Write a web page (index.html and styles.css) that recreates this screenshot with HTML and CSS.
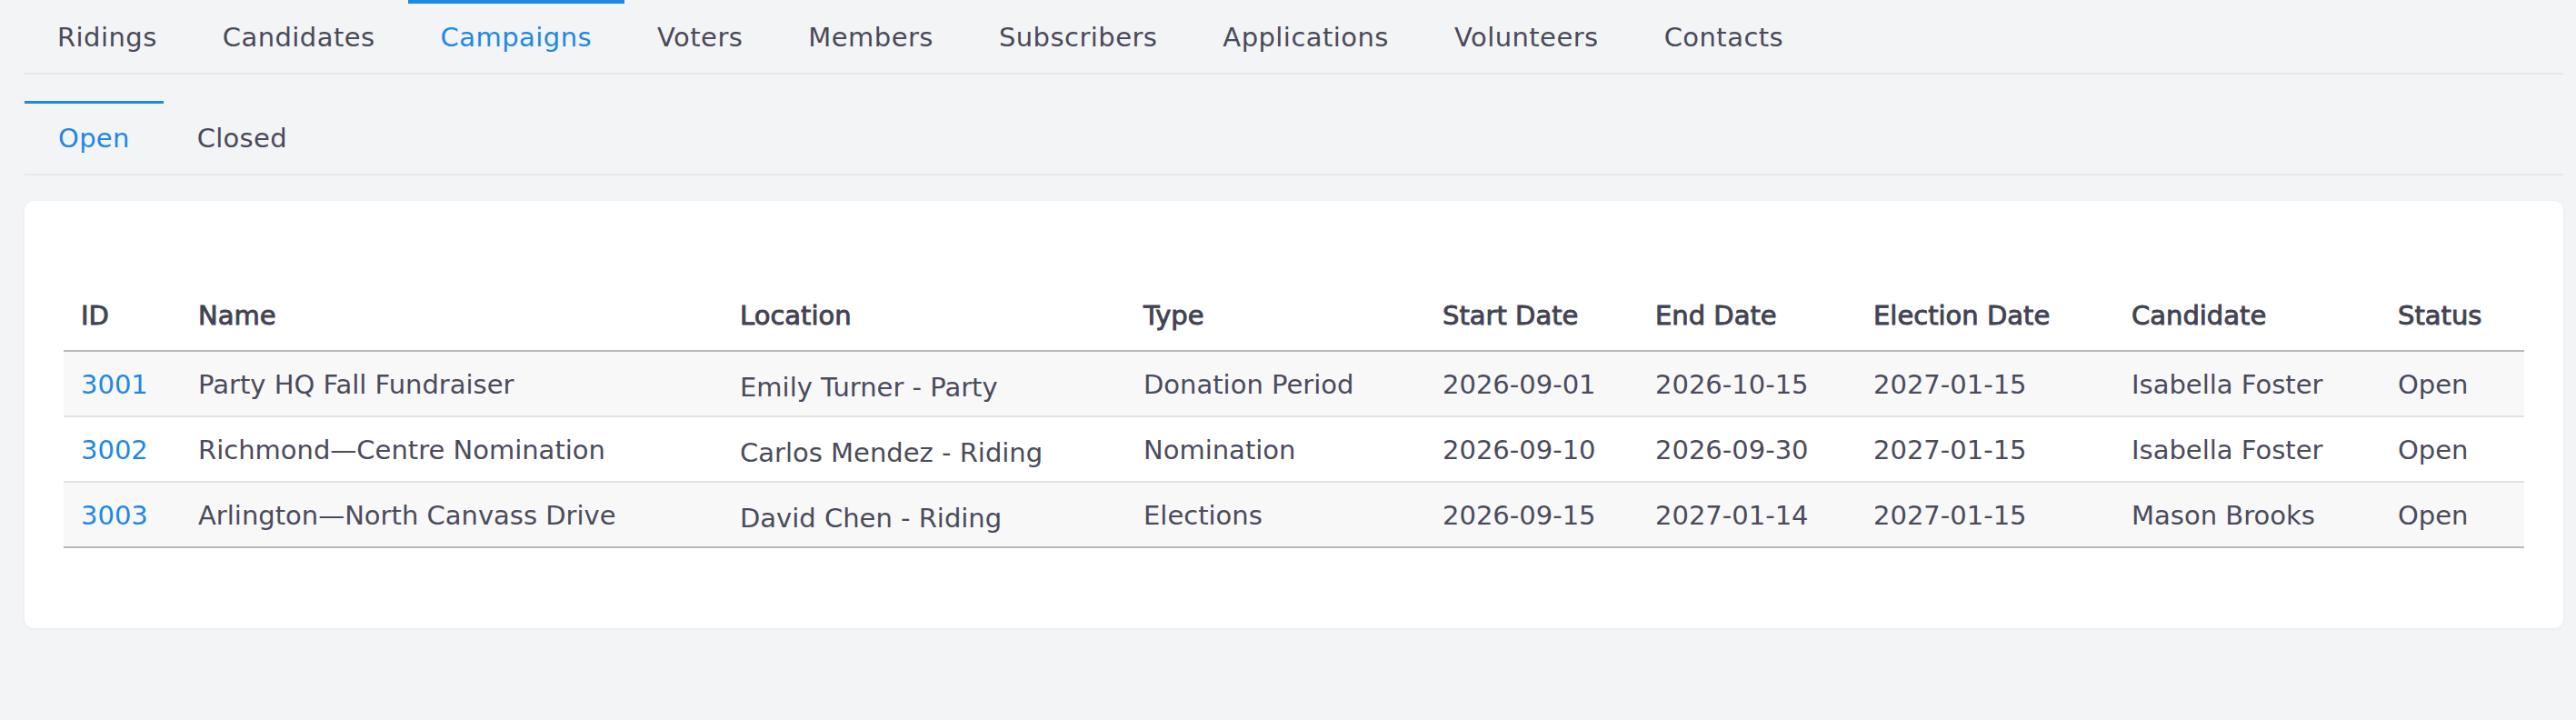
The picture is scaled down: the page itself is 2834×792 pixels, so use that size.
FILE: index.html
```html
<!DOCTYPE html>
<html lang="en">
<head>
<meta charset="utf-8">
<title>Campaigns</title>
<link rel="stylesheet" href="styles.css">
</head>
<body>
<div class="page">
  <nav class="tabs main-tabs">
    <a class="tab">Ridings</a>
    <a class="tab">Candidates</a>
    <a class="tab active">Campaigns</a>
    <a class="tab">Voters</a>
    <a class="tab">Members</a>
    <a class="tab">Subscribers</a>
    <a class="tab">Applications</a>
    <a class="tab">Volunteers</a>
    <a class="tab">Contacts</a>
  </nav>
  <nav class="tabs sub-tabs">
    <a class="tab active">Open</a>
    <a class="tab">Closed</a>
  </nav>
  <section class="card">
    <table class="grid">
      <colgroup>
        <col class="w-id"><col class="w-name"><col class="w-loc"><col class="w-type"><col class="w-start"><col class="w-end"><col class="w-elec"><col class="w-cand"><col class="w-status">
      </colgroup>
      <thead>
        <tr><th>ID</th><th>Name</th><th>Location</th><th>Type</th><th>Start Date</th><th>End Date</th><th>Election Date</th><th>Candidate</th><th>Status</th></tr>
      </thead>
      <tbody>
        <tr><td><a class="id-link">3001</a></td><td>Party HQ Fall Fundraiser</td><td class="loc">Emily Turner - Party</td><td>Donation Period</td><td>2026-09-01</td><td>2026-10-15</td><td>2027-01-15</td><td>Isabella Foster</td><td>Open</td></tr>
        <tr><td><a class="id-link">3002</a></td><td>Richmond—Centre Nomination</td><td class="loc">Carlos Mendez - Riding</td><td>Nomination</td><td>2026-09-10</td><td>2026-09-30</td><td>2027-01-15</td><td>Isabella Foster</td><td>Open</td></tr>
        <tr><td><a class="id-link">3003</a></td><td>Arlington—North Canvass Drive</td><td class="loc">David Chen - Riding</td><td>Elections</td><td>2026-09-15</td><td>2027-01-14</td><td>2027-01-15</td><td>Mason Brooks</td><td>Open</td></tr>
      </tbody>
    </table>
  </section>
</div>
</body>
</html>
```

FILE: styles.css
```css
html, body {
  margin: 0;
  padding: 0;
}
body {
  background: #f3f4f6;
  font-family: "DejaVu Sans", "Liberation Sans", sans-serif;
  font-size: 29px;
  color: #4b4b5b;
}
.page {
  padding: 0 14px 0 27px;
  min-height: 792px;
  box-sizing: border-box;
}
.tabs {
  display: flex;
  border-bottom: 2px solid #e6e8eb;
}
.tab {
  display: flex;
  align-items: center;
  box-sizing: border-box;
  height: 80px;
  line-height: 1;
  color: #4a4a59;
  text-decoration: none;
  white-space: nowrap;
}
.main-tabs .tab {
  padding: 0 36px 1px;
  border-top: 4px solid transparent;
  letter-spacing: 0.45px;
}
.sub-tabs {
  margin-top: 29px;
}
.sub-tabs .tab {
  padding: 0 37px;
  border-top: 3px solid transparent;
  letter-spacing: 0.3px;
}
.tab.active {
  color: #1e88e5;
  border-top-color: #1e88e5;
}
.card {
  margin-top: 28px;
  background: #ffffff;
  border-radius: 10px;
  padding: 94px 43px 88px;
  box-shadow: 0 1px 4px rgba(30, 40, 60, 0.05);
}
.grid {
  width: 100%;
  table-layout: fixed;
  border-collapse: separate;
  border-spacing: 0;
}
.w-id { width: 129px; }
.w-name { width: 596px; }
.w-loc { width: 444px; }
.w-type { width: 329px; }
.w-start { width: 234px; }
.w-end { width: 240px; }
.w-elec { width: 284px; }
.w-cand { width: 293px; }
.w-status { width: 158px; }
.grid th,
.grid td {
  height: 72px;
  box-sizing: border-box;
  padding: 0 19px;
  text-align: left;
  vertical-align: middle;
  white-space: nowrap;
  line-height: 1.2;
}
.grid th {
  font-weight: 400;
  color: #434352;
  -webkit-text-stroke: 0.9px #434352;
  border-bottom: 2px solid #b9b9bd;
  padding-bottom: 5px;
}
.grid td {
  border-bottom: 2px solid #e2e2e4;
  padding-top: 3px;
}
.grid tbody tr:nth-child(odd) td {
  background: #f8f8f9;
}
.grid tbody tr:last-child td {
  border-bottom-color: #b9b9bd;
}
.grid td.loc {
  padding-top: 9px;
}
.id-link {
  color: #1e88e5;
  text-decoration: none;
}
```
